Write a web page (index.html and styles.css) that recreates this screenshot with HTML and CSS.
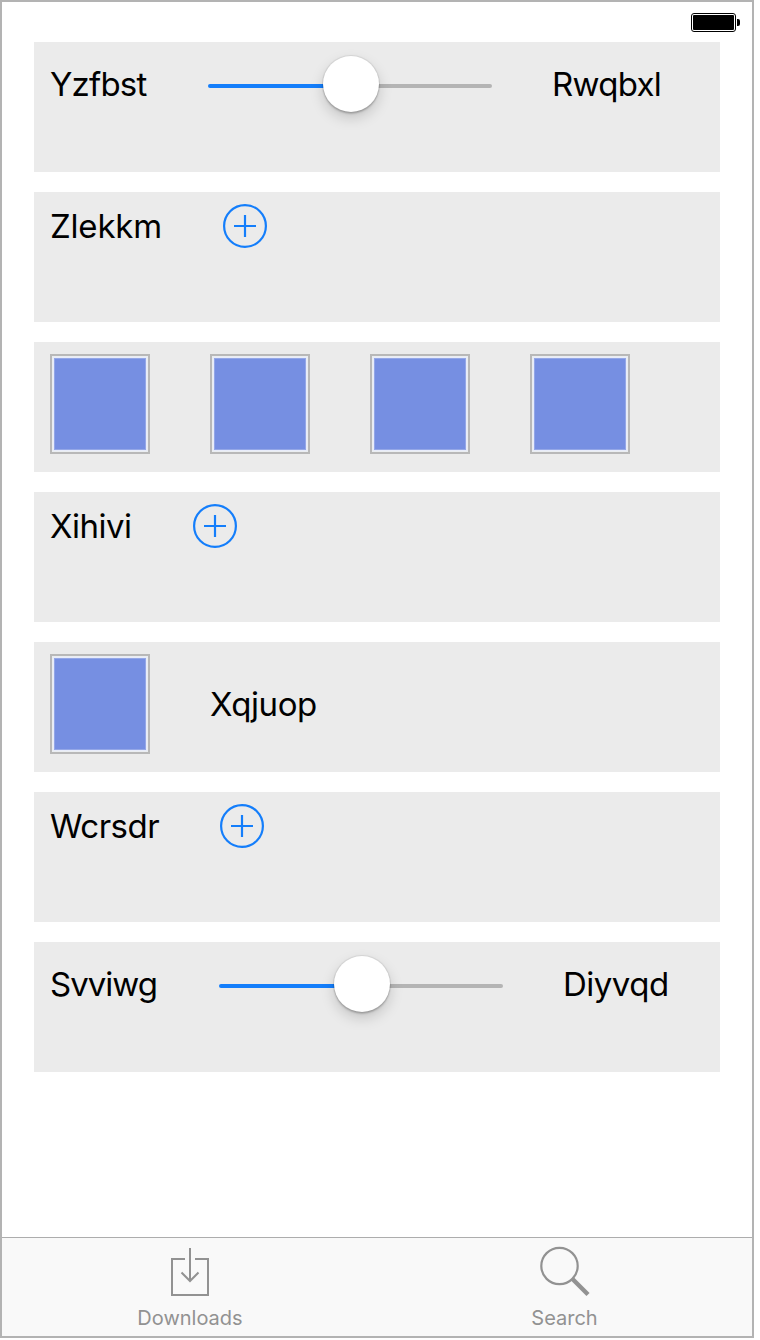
FILE: index.html
```html
<!DOCTYPE html>
<html lang="en">
<head>
<meta charset="utf-8">
<title>Downloads</title>
<link rel="stylesheet" href="styles.css">
</head>
<body>
<div class="screen">
  <header class="status">
    <svg class="battery" width="49" height="19" viewBox="0 0 49 19">
      <rect x=".5" y=".5" width="44" height="18" rx="2.5" fill="#fff" stroke="#000"/>
      <rect x="2" y="2" width="41" height="15" rx="1" fill="#000"/>
      <path d="M46 6h1a2 2 0 0 1 2 2v3a2 2 0 0 1-2 2h-1z" fill="#000"/>
    </svg>
  </header>
  <main class="rows">
    <section class="row"><div class="line">
      <span class="label yzfbst">Yzfbst</span>
      <div class="slider"><div class="track"></div><div class="knob"></div></div>
      <span class="label rwqbxl">Rwqbxl</span>
    </div></section>
    <section class="row"><div class="line">
      <span class="label zlekkm">Zlekkm</span>
      <svg class="add" viewBox="0 0 44 44"><circle cx="22" cy="22" r="20.9"/><path d="M11 22h22M22 11v22"/></svg>
    </div></section>
    <section class="row"><div class="line">
      <div class="swatch"></div><div class="swatch"></div><div class="swatch"></div><div class="swatch"></div>
    </div></section>
    <section class="row"><div class="line">
      <span class="label xihivi">Xihivi</span>
      <svg class="add" viewBox="0 0 44 44"><circle cx="22" cy="22" r="20.9"/><path d="M11 22h22M22 11v22"/></svg>
    </div></section>
    <section class="row"><div class="line">
      <div class="swatch"></div>
      <span class="label xqjuop">Xqjuop</span>
    </div></section>
    <section class="row"><div class="line">
      <span class="label wcrsdr">Wcrsdr</span>
      <svg class="add" viewBox="0 0 44 44"><circle cx="22" cy="22" r="20.9"/><path d="M11 22h22M22 11v22"/></svg>
    </div></section>
    <section class="row"><div class="line">
      <span class="label svviwg">Svviwg</span>
      <div class="slider"><div class="track"></div><div class="knob"></div></div>
      <span class="label diyvqd">Diyvqd</span>
    </div></section>
  </main>
  <nav class="tabs">
    <div class="tab">
      <svg class="icon" width="52" height="52" viewBox="0 0 52 52">
        <path d="M21 13H8v36h36V13H31M26 2v33M17.5 26.5 26 35l8.5-8.5" fill="none" stroke="#929292" stroke-width="2"/>
      </svg>
      <span class="caption downloads">Downloads</span>
    </div>
    <div class="tab">
      <svg class="icon" width="52" height="52" viewBox="0 0 52 52">
        <circle cx="20.5" cy="20" r="18.2" fill="none" stroke="#929292" stroke-width="2.2"/>
        <path d="M33 32.5 49 48.5" fill="none" stroke="#929292" stroke-width="4.4"/>
      </svg>
      <span class="caption">Search</span>
    </div>
  </nav>
</div>
</body>
</html>
```
FILE: styles.css
```css
body {
  margin: 0;
  background: #fff;
  font-family: Inter, "Liberation Sans", sans-serif;
}

.screen {
  box-sizing: border-box;
  width: 754px;
  height: 1338px;
  border: 2px solid #b3b3b3;
  display: flex;
  flex-direction: column;
}

.status {
  box-sizing: border-box;
  height: 40px;
  padding: 11px 12px 0 0;
  display: flex;
  justify-content: flex-end;
  align-items: flex-start;
}

.rows {
  flex: 1;
  padding: 0 32px;
  display: flex;
  flex-direction: column;
  gap: 20px;
}

.row {
  box-sizing: border-box;
  height: 130px;
  padding: 12px 16px;
  background: #ebebeb;
}

.line {
  display: flex;
  align-items: center;
  gap: 60px;
}

.label {
  font-size: 33px;
  line-height: 40px;
  color: #000;
  white-space: nowrap;
}

.yzfbst { width: 98px; letter-spacing: -.8px; }
.rwqbxl { width: 110px; letter-spacing: -.7px; }
.zlekkm { width: 113px; letter-spacing: -.2px; }
.xihivi { width: 83px; letter-spacing: -.5px; }
.xqjuop { width: 107px; letter-spacing: -.4px; }
.wcrsdr { width: 110px; letter-spacing: -.5px; }
.svviwg { width: 109px; letter-spacing: -1px; }
.diyvqd { width: 106px; letter-spacing: -.5px; }

.slider {
  width: 284px;
  height: 60px;
  display: grid;
  align-items: center;
  justify-items: center;
}

.track {
  grid-area: 1 / 1;
  width: 284px;
  height: 4px;
  margin-top: 4px;
  border-radius: 2px;
  background: linear-gradient(90deg, #147efb 50%, #b4b4b4 50%);
}

.knob {
  grid-area: 1 / 1;
  width: 56px;
  height: 56px;
  margin-left: 2px;
  border-radius: 50%;
  background: #fff;
  box-shadow: 0 0 1px 1px rgba(0, 0, 0, .08), 0 2px 2px rgba(0, 0, 0, .18), 0 6px 14px rgba(0, 0, 0, .17);
}

.add {
  width: 44px;
  height: 44px;
  fill: none;
  stroke: #147efb;
  stroke-width: 2.2;
}

.swatch {
  box-sizing: border-box;
  width: 100px;
  height: 100px;
  border: 2px solid #b8b8b8;
  background: #768fe2;
  box-shadow: inset 0 0 0 1px #eaedf0, inset 0 0 0 2px #e8ecfa, inset 0 0 0 3px #94a7e7;
}

.tabs {
  box-sizing: border-box;
  height: 99px;
  border-top: 1px solid #adadad;
  background: #f9f9f9;
  display: flex;
}

.tab {
  flex: 1;
  padding-top: 8px;
  display: flex;
  flex-direction: column;
  align-items: center;
}

.caption {
  margin-top: 8px;
  font-size: 20px;
  line-height: 24px;
  color: #929292;
}

.downloads {
  padding-left: 1px;
}
```
